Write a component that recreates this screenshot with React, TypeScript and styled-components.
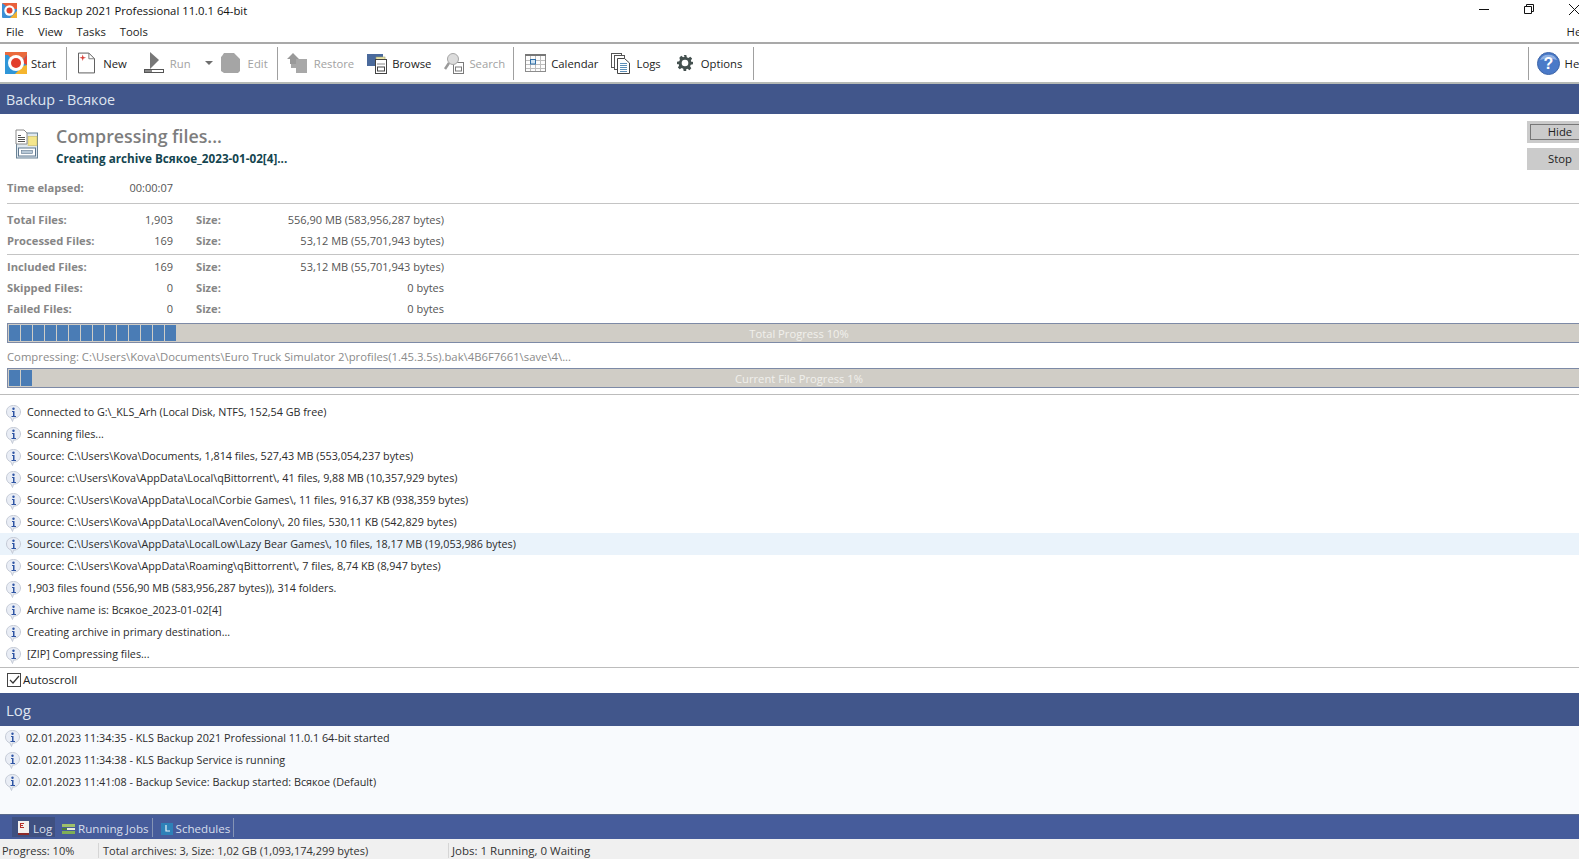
import React from "react";
import styled, { createGlobalStyle } from "styled-components";

const GlobalStyle = createGlobalStyle`
  html, body {
    margin: 0;
    padding: 0;
    background: #fff;
    overflow: hidden;
  }
  body {
    font-family: "Open Sans", "Noto Sans", sans-serif;
    font-size: 11.3px;
    color: #222;
  }
`;

const Window = styled.div`
  width: 1579px;
  height: 859px;
  overflow: hidden;
  display: flex;
  flex-direction: column;
  background: #fff;
`;

const TitleBar = styled.div`
  height: 21px;
  display: flex;
  align-items: center;
  padding-left: 2px;
  gap: 5px;
  color: #111;
`;

const WindowButtons = styled.div`
  margin-left: auto;
  display: flex;
  align-items: center;
  gap: 35px;
  margin-right: -1px;
  margin-bottom: 3px;
  color: #111;
`;

const MenuBar = styled.div`
  height: 21px;
  display: flex;
  align-items: center;
  padding-left: 6px;
  gap: 14px;
  color: #222;
`;

const HelpMenu = styled.span`
  margin-left: auto;
  margin-right: -12px;
`;

const Toolbar = styled.div`
  height: 38px;
  border-top: 2px solid #a9a9a9;
  border-bottom: 2px solid #b5b9b5;
  display: flex;
  align-items: center;
  padding-left: 5px;
  box-sizing: content-box;
`;

const ToolSeparator = styled.div<{ $right: number }>`
  width: 1px;
  height: 33px;
  background: #a0a0a0;
  margin-right: ${(p) => p.$right}px;
  flex-shrink: 0;
`;

const ToolButton = styled.div<{ $disabled?: boolean; $gap: number; $pad: number }>`
  display: flex;
  align-items: center;
  gap: ${(p) => p.$gap}px;
  margin-right: ${(p) => p.$pad}px;
  color: ${(p) => (p.$disabled ? "#a2a2a2" : "#222")};
  white-space: nowrap;
  flex-shrink: 0;
`;

const ToolSpacer = styled.div`
  flex: 1;
`;

const Caret = styled.div`
  width: 0;
  height: 0;
  border-left: 4px solid transparent;
  border-right: 4px solid transparent;
  border-top: 4px solid #6e6e6e;
  margin-right: 8px;
`;

const PanelHeader = styled.div<{ $big?: boolean }>`
  background: #41568b;
  color: #dfe5f0;
  height: ${(p) => (p.$big ? 33 : 30)}px;
  display: flex;
  align-items: center;
  padding-left: 6px;
  font-size: ${(p) => (p.$big ? 15 : 14.3)}px;
  flex-shrink: 0;
`;

const Content = styled.div`
  height: 579px;
  display: flex;
  flex-direction: column;
  flex-shrink: 0;
  overflow: hidden;
`;

const Status = styled.div`
  height: 65px;
  display: flex;
  align-items: flex-start;
  padding: 12px 0 0 15px;
  gap: 17px;
  flex-shrink: 0;
  box-sizing: border-box;
`;

const StatusText = styled.div`
  flex: 1;
`;

const ArchiveSvg = styled.svg`
  margin-top: 3px;
  flex-shrink: 0;
`;

const Heading = styled.div`
  font-size: 17.8px;
  line-height: 21px;
  font-weight: 600;
  color: #7d7d7d;
`;

const Subheading = styled.div`
  margin-top: 4px;
  font-size: 11.7px;
  line-height: 15px;
  font-weight: 700;
  color: #14454f;
`;

const SideButtons = styled.div`
  display: flex;
  flex-direction: column;
  gap: 5px;
  margin-top: -5px;
  margin-right: -14px;
`;

const SideButton = styled.div<{ $focused?: boolean }>`
  width: 66px;
  height: 22px;
  padding-bottom: 2px;
  background: #cbcbcb;
  display: flex;
  align-items: center;
  justify-content: center;
  color: #222;
  box-sizing: border-box;
  ${(p) => p.$focused && "outline: 1px solid #777; outline-offset: -4px;"}
`;

const Stats = styled.div`
  padding-left: 7px;
  color: #7c7c7c;
  font-size: 11px;
`;

const StatRow = styled.div`
  height: 21px;
  display: grid;
  grid-template-columns: 110px 56px 23px 27px 221px;
  align-items: center;
  white-space: nowrap;
`;

const ElapsedRow = styled(StatRow)`
  height: 17px;
  margin-bottom: 7px;
`;

const StatLabel = styled.span`
  font-weight: 700;
  font-size: 11.2px;
  color: #868686;
`;

const StatValue = styled.span<{ $column: number }>`
  grid-column: ${(p) => p.$column};
  text-align: right;
  color: #555;
`;

const SizeCell = styled(StatLabel)`
  grid-column: 4;
`;

const Rule = styled.div<{ $before: number; $after: number }>`
  height: 1px;
  background: #c4c4c4;
  margin: ${(p) => p.$before}px 0 ${(p) => p.$after}px;
`;

const Bar = styled.div<{ $top?: number }>`
  width: 1584px;
  height: 20px;
  box-sizing: border-box;
  margin: ${(p) => p.$top ?? 0}px 0 0 7px;
  background: #d0cdc6;
  border: 1px solid #7d8aa6;
  position: relative;
  flex-shrink: 0;
  display: flex;
  align-items: stretch;
  padding: 1px 0 1px 1px;
  gap: 1px;
`;

const BarChunk = styled.div`
  width: 11px;
  background: #4a7cb5;
`;

const BarLabel = styled.div`
  position: absolute;
  inset: 0;
  display: flex;
  align-items: center;
  justify-content: center;
  color: #f1f0ec;
  font-size: 11.2px;
`;

const FileLine = styled.div`
  height: 25px;
  padding: 2px 0 0 7px;
  box-sizing: border-box;
  display: flex;
  align-items: center;
  color: #8a8a8a;
  white-space: nowrap;
`;

const MessageList = styled.div`
  border-top: 1px solid #bcbcbc;
  margin-top: 6px;
  padding-top: 6px;
  flex: 1;
`;

const MessageRow = styled.div<{ $selected?: boolean }>`
  height: 22px;
  display: flex;
  align-items: center;
  gap: 6px;
  padding-left: 6px;
  font-size: 10.75px;
  color: #2b2b2b;
  white-space: nowrap;
  background: ${(p) => (p.$selected ? "#eaf3fb" : "transparent")};
`;

const AutoscrollRow = styled.div`
  height: 26px;
  padding-bottom: 2px;
  box-sizing: border-box;
  border-top: 1px solid #bcbcbc;
  display: flex;
  align-items: center;
  gap: 2px;
  padding-left: 7px;
  font-size: 11.6px;
  color: #222;
  flex-shrink: 0;
`;

const CheckBox = styled.div`
  width: 12px;
  height: 12px;
  border: 1px solid #444;
  display: flex;
  align-items: center;
  justify-content: center;
`;

const LogList = styled.div`
  flex: 1;
  background: #f8fafd;
`;

const LogRow = styled(MessageRow)`
  padding-left: 5px;
  font-size: 10.8px;
`;

const TabStrip = styled.div`
  height: 25px;
  background: #465c9b;
  border-top: 1px solid #5a6a8c;
  box-sizing: border-box;
  display: flex;
  align-items: stretch;
  padding-left: 12px;
  color: #d7deeb;
  font-size: 11.6px;
  flex-shrink: 0;
`;

const Tab = styled.div<{ $left?: number }>`
  display: flex;
  align-items: center;
  gap: 3px;
  padding: 2px 3px 0 0;
  margin: 3px 0 2px ${(p) => p.$left ?? 0}px;
  border-right: 1px solid #8594b5;
`;

const ActiveTab = styled.div`
  display: flex;
  align-items: center;
  gap: 4px;
  width: 43px;
  padding: 2px 0 0 6px;
  box-sizing: border-box;
  margin: 2px 7px 2px 0;
  background: #3f5080;
`;

const StatusBar = styled.div`
  height: 20px;
  background: #f0f0f0;
  display: flex;
  align-items: center;
  padding-top: 2px;
  box-sizing: border-box;
  font-size: 11px;
  color: #333;
  white-space: nowrap;
  flex-shrink: 0;
`;

const StatusCell = styled.div<{ $width: number; $pad: number }>`
  width: ${(p) => p.$width}px;
  padding-left: ${(p) => p.$pad}px;
  box-sizing: border-box;
  border-right: 1px solid #d5d5d5;
  height: 15px;
  line-height: 15px;
`;

const LastStatusCell = styled.div`
  padding-left: 3px;
  font-size: 11.5px;
`;

const AppIcon = () => (
  <svg width="15" height="15" viewBox="0 0 15 15">
    <rect width="15" height="15" rx="1" fill="#3c8fd6" />
    <path d="M0 0h15v6H8z" fill="#e8603c" />
    <path d="M8 15h7V8z" fill="#f2b134" />
    <circle cx="7.5" cy="7.5" r="5.2" fill="#fff" />
    <circle cx="7.5" cy="7.5" r="3" fill="#e0412f" />
  </svg>
);

const StartIcon = () => (
  <svg width="22" height="22" viewBox="0 0 22 22">
    <rect width="22" height="22" fill="#2f96d8" />
    <path d="M0 0h22v3l-5 5H8L3 3H0z" fill="#ea6a3c" />
    <path d="M22 3v10l-4-2V8z" fill="#e8452f" />
    <path d="M22 22H10l8-8 4-1z" fill="#f5b52e" />
    <circle cx="11" cy="11" r="8" fill="#fff" />
    <circle cx="11" cy="11" r="5" fill="#e23f2d" />
  </svg>
);

const NewIcon = () => (
  <svg width="17" height="22" viewBox="0 0 18 22">
    <path d="M.5.5h11l6 6v15H.5z" fill="#fff" stroke="#555" />
    <path d="M11.500.5v6h6" fill="none" stroke="#777" />
    <path d="M5 2l.8 2.700L8.500 5.500 5.800 6.300 5 9 4.200 6.300 1.500 5.500 4.200 4.700z" fill="#d8413a" />
  </svg>
);

const RunIcon = () => (
  <svg width="20" height="22" viewBox="0 0 20 22">
    <path d="M6 0l9 8-9 9z" fill="#777" />
    <rect x=".5" y="17.500" width="19" height="3" fill="#fff" stroke="#555" />
    <rect x="1" y="18" width="7" height="2" fill="#888" />
  </svg>
);

const EditIcon = () => (
  <svg width="19" height="20" viewBox="0 0 19 20">
    <path d="M1 3l2-3h10l6 6v12l-2 2H3l-3-2V4z" fill="#a5a5a5" />
  </svg>
);

const RestoreIcon = () => (
  <svg width="21" height="21" viewBox="0 0 21 21">
    <path d="M6 0L0 6h3v5h6V7h3V6z" fill="#999" />
    <rect x="9" y="6" width="11" height="14" fill="#a8a8a8" />
    <rect x="4" y="11" width="10" height="4" fill="#a8a8a8" />
  </svg>
);

const BrowseIcon = () => (
  <svg width="20" height="21" viewBox="0 0 20 21">
    <rect x="0" y="1" width="16" height="12" fill="#4a6a9c" />
    <rect x="9" y="4" width="9" height="8" fill="#eee8a8" stroke="#9a9a70" strokeWidth=".6" />
    <rect x="8.500" y="6.500" width="11" height="14" fill="#fff" stroke="#444" />
    <rect x="10.500" y="14" width="7" height="4" fill="none" stroke="#444" />
    <path d="M10 11h8" stroke="#888" />
  </svg>
);

const SearchIcon = () => (
  <svg width="20" height="21" viewBox="0 0 20 21">
    <rect x="9.500" y="9.500" width="10" height="11" fill="#fff" stroke="#7a7a7a" />
    <rect x="11.500" y="14" width="6" height="4" fill="none" stroke="#7a7a7a" />
    <circle cx="9" cy="6" r="5.500" fill="#dcdcdc" stroke="#a5a5a5" />
    <path d="M5 10l-4 6" stroke="#9a9a9a" strokeWidth="2.500" />
  </svg>
);

const CalendarIcon = () => (
  <svg width="21" height="18" viewBox="0 0 21 18">
    <rect x=".5" y=".5" width="20" height="17" fill="#fdfdfd" stroke="#8c8c8c" />
    <rect x="0" y="0" width="21" height="2" fill="#777" />
    <path d="M5.500 2v15M10.500 2v15M15.500 2v15M1 6.500h19M1 10.500h19M1 14.500h19" stroke="#bdbdbd" />
    <rect x="5.500" y="5.500" width="5" height="4.500" fill="#cfe3f2" stroke="#2f6ea8" />
  </svg>
);

const LogsIcon = () => (
  <svg width="19" height="21" viewBox="0 0 19 21">
    <rect x=".5" y=".5" width="10" height="14" fill="#fff" stroke="#555" />
    <rect x="3.500" y="2.500" width="10" height="14" fill="#fff" stroke="#555" />
    <path d="M6.500 5.500h7l5 4.500v10.500h-12z" fill="#fff" stroke="#444" />
    <path d="M9 10.500h7M9 12.500h7M9 14.500h7M9 16.500h7M9 18.500h7" stroke="#5c8fb8" />
  </svg>
);

const GearIcon = () => (
  <svg width="16" height="16" viewBox="0 0 24 24" fill="#44504f">
    <path fillRule="evenodd" d="M10 0h4l.7 3.400 2.300 1 2.900-1.900 2.800 2.800-1.900 2.900 1 2.300L24 10v4l-3.400.7-1 2.300 1.900 2.900-2.800 2.800-2.900-1.900-2.300 1L14 24h-4l-.7-3.400-2.300-1-2.900 1.900-2.800-2.800 1.900-2.900-1-2.300L0 14v-4l3.400-.7 1-2.300L3.500 4.100l2.800-2.800 2.900 1.900 2.300-1zM12 7a5 5 0 100 10 5 5 0 000-10z" />
  </svg>
);

const HelpIcon = () => (
  <svg width="23" height="23" viewBox="0 0 23 23">
    <circle cx="11.500" cy="11.500" r="11" fill="#4a7ac8" stroke="#3f66a8" />
    <path d="M3 8a9 8 0 0117 0q-8-3-17 0z" fill="#8fb0e2" />
    <text x="11.500" y="17" textAnchor="middle" fontSize="16" fontWeight="700" fill="#fff" fontFamily="Liberation Sans, sans-serif">?</text>
  </svg>
);

const ArchiveIcon = () => (
  <ArchiveSvg width="24" height="31" viewBox="0 0 24 30">
    <rect x="1.500" y="3.500" width="21" height="25" fill="#dfe8ef" stroke="#6a8396" />
    <rect x="13" y="7" width="9" height="9" fill="#f4e68c" stroke="#c8b85c" strokeWidth=".6" />
    <path d="M1 .5h8l3 3v11H1z" fill="#fff" stroke="#8a8a8a" />
    <path d="M3 6h3M3 8h7M3 10h7M3 12h7" stroke="#555" />
    <rect x="3.500" y="18.500" width="17" height="8" fill="#fff" stroke="#5f7890" />
    <rect x="6.500" y="21" width="11" height="3" fill="#b7c8d6" stroke="#5f7890" strokeWidth=".6" />
  </ArchiveSvg>
);

const InfoSvg = styled.svg`
  margin-top: 3px;
  flex-shrink: 0;
`;

const InfoIcon = () => (
  <InfoSvg width="15" height="17" viewBox="0 0 15 17">
    <path d="M7.500.5C3.300.5.500 3 .5 7c0 3 1.800 5 4.500 6l1.500 3.500 1-3.300c4 0 7-2.600 7-6.200S11.700.5 7.500.5z" fill="#e9edf5" stroke="#c4cad6" />
    <circle cx="7.500" cy="3.700" r="1.200" fill="#2f55a4" />
    <path d="M6 6h2.500v5H10v1H5.500v-1H7V7H6z" fill="#2f55a4" />
  </InfoSvg>
);

const TabLogIcon = () => (
  <svg width="11" height="14" viewBox="0 0 11 14">
    <rect width="11" height="14" fill="#f3f0ee" />
    <path d="M2 2h4v1H3v1h2v1H3v1h3v1H2z" fill="#b5302b" />
    <rect y="12" width="11" height="2" fill="#8c2a2a" />
  </svg>
);

const TabJobsIcon = () => (
  <svg width="13" height="10" viewBox="0 0 13 10">
    <rect width="13" height="3" fill="#9ec06a" />
    <rect y="4" width="5" height="2" fill="#4b7a3c" />
    <rect x="5" y="4" width="8" height="2" fill="#e8ecdf" />
    <rect y="7" width="13" height="3" fill="#7fae56" />
  </svg>
);

const TabScheduleIcon = () => (
  <svg width="12" height="12" viewBox="0 0 12 12">
    <rect width="12" height="12" fill="#2e81b8" />
    <path d="M5 2v6h4" fill="none" stroke="#e8f3fa" strokeWidth="1.200" />
  </svg>
);

const messages = [
  "Connected to G:\\_KLS_Arh (Local Disk, NTFS, 152,54 GB free)",
  "Scanning files...",
  "Source: C:\\Users\\Kova\\Documents, 1,814 files, 527,43 MB (553,054,237 bytes)",
  "Source: c:\\Users\\Kova\\AppData\\Local\\qBittorrent\\, 41 files, 9,88 MB (10,357,929 bytes)",
  "Source: C:\\Users\\Kova\\AppData\\Local\\Corbie Games\\, 11 files, 916,37 KB (938,359 bytes)",
  "Source: C:\\Users\\Kova\\AppData\\Local\\AvenColony\\, 20 files, 530,11 KB (542,829 bytes)",
  "Source: C:\\Users\\Kova\\AppData\\LocalLow\\Lazy Bear Games\\, 10 files, 18,17 MB (19,053,986 bytes)",
  "Source: C:\\Users\\Kova\\AppData\\Roaming\\qBittorrent\\, 7 files, 8,74 KB (8,947 bytes)",
  "1,903 files found (556,90 MB (583,956,287 bytes)), 314 folders.",
  "Archive name is: Всякое_2023-01-02[4]",
  "Creating archive in primary destination...",
  "[ZIP] Compressing files...",
];

const logLines = [
  "02.01.2023 11:34:35 - KLS Backup 2021 Professional 11.0.1 64-bit started",
  "02.01.2023 11:34:38 - KLS Backup Service is running",
  "02.01.2023 11:41:08 - Backup Sevice: Backup started: Всякое (Default)",
];

const totalStats = [
  ["Total Files:", "1,903", "556,90 MB (583,956,287 bytes)"],
  ["Processed Files:", "169", "53,12 MB (55,701,943 bytes)"],
];

const resultStats = [
  ["Included Files:", "169", "53,12 MB (55,701,943 bytes)"],
  ["Skipped Files:", "0", "0 bytes"],
  ["Failed Files:", "0", "0 bytes"],
];

const renderStat = ([label, count, size]: string[]) => (
  <StatRow key={label}>
    <StatLabel>{label}</StatLabel>
    <StatValue $column={2}>{count}</StatValue>
    <SizeCell>Size:</SizeCell>
    <StatValue $column={5}>{size}</StatValue>
  </StatRow>
);

const App = () => {
  return (
    <Window>
      <GlobalStyle />
      <TitleBar>
        <AppIcon />
        <span>KLS Backup 2021 Professional 11.0.1 64-bit</span>
        <WindowButtons>
          <svg width="10" height="10" viewBox="0 0 10 10">
            <path d="M0 5.500h10" stroke="#111" />
          </svg>
          <svg width="10" height="10" viewBox="0 0 10 10">
            <path d="M2.500 2.500V.5h7v7h-2M.5 2.500h7v7h-7z" fill="none" stroke="#111" />
          </svg>
          <svg width="11" height="11" viewBox="0 0 11 11">
            <path d="M0 0l11 11M11 0L0 11" stroke="#111" />
          </svg>
        </WindowButtons>
      </TitleBar>
      <MenuBar>
        <span>File</span>
        <span>View</span>
        <span>Tasks</span>
        <span>Tools</span>
        <HelpMenu>Help</HelpMenu>
      </MenuBar>
      <Toolbar>
        <ToolButton $gap={4} $pad={10}><StartIcon />Start</ToolButton>
        <ToolSeparator $right={11} />
        <ToolButton $gap={8} $pad={17}><NewIcon />New</ToolButton>
        <ToolButton $disabled $gap={6} $pad={14}><RunIcon />Run</ToolButton>
        <Caret />
        <ToolButton $disabled $gap={8} $pad={9}><EditIcon />Edit</ToolButton>
        <ToolSeparator $right={9} />
        <ToolButton $disabled $gap={6} $pad={13}><RestoreIcon />Restore</ToolButton>
        <ToolButton $gap={5} $pad={13}><BrowseIcon />Browse</ToolButton>
        <ToolButton $disabled $gap={5} $pad={8}><SearchIcon />Search</ToolButton>
        <ToolSeparator $right={11} />
        <ToolButton $gap={5} $pad={13}><CalendarIcon />Calendar</ToolButton>
        <ToolButton $gap={6} $pad={16}><LogsIcon />Logs</ToolButton>
        <ToolButton $gap={8} $pad={11}><GearIcon />Options</ToolButton>
        <ToolSeparator $right={0} />
        <ToolSpacer />
        <ToolSeparator $right={8} />
        <ToolButton $gap={5} $pad={-10}><HelpIcon />Help</ToolButton>
      </Toolbar>
      <PanelHeader>Backup - Всякое</PanelHeader>
      <Content>
        <Status>
          <ArchiveIcon />
          <StatusText>
            <Heading>Compressing files...</Heading>
            <Subheading>Creating archive Всякое_2023-01-02[4]...</Subheading>
          </StatusText>
          <SideButtons>
            <SideButton $focused>Hide</SideButton>
            <SideButton>Stop</SideButton>
          </SideButtons>
        </Status>
        <Stats>
          <ElapsedRow>
            <StatLabel>Time elapsed:</StatLabel>
            <StatValue $column={2}>00:00:07</StatValue>
          </ElapsedRow>
          <Rule $before={0} $after={5} />
          {totalStats.map(renderStat)}
          <Rule $before={3} $after={1} />
          {resultStats.map(renderStat)}
        </Stats>
        <Bar $top={4}>
          {Array.from({ length: 14 }, (_, i) => <BarChunk key={i} />)}
          <BarLabel>Total Progress 10%</BarLabel>
        </Bar>
        <FileLine>Compressing: C:\Users\Kova\Documents\Euro Truck Simulator 2\profiles(1.45.3.5s).bak\4B6F7661\save\4\...</FileLine>
        <Bar>
          {Array.from({ length: 2 }, (_, i) => <BarChunk key={i} />)}
          <BarLabel>Current File Progress 1%</BarLabel>
        </Bar>
        <MessageList>
          {messages.map((m, i) => (
            <MessageRow key={m} $selected={i === 6}>
              <InfoIcon />
              {m}
            </MessageRow>
          ))}
        </MessageList>
        <AutoscrollRow>
          <CheckBox>
            <svg width="11" height="10" viewBox="0 0 11 10">
              <path d="M1 5l3 3 6-7" fill="none" stroke="#333" strokeWidth="1.200" />
            </svg>
          </CheckBox>
          Autoscroll
        </AutoscrollRow>
      </Content>
      <PanelHeader $big>Log</PanelHeader>
      <LogList>
        {logLines.map((l) => (
          <LogRow key={l}>
            <InfoIcon />
            {l}
          </LogRow>
        ))}
      </LogList>
      <TabStrip>
        <ActiveTab><TabLogIcon />Log</ActiveTab>
        <Tab><TabJobsIcon />Running Jobs</Tab>
        <Tab $left={8}><TabScheduleIcon />Schedules</Tab>
      </TabStrip>
      <StatusBar>
        <StatusCell $width={99} $pad={2}>Progress: 10%</StatusCell>
        <StatusCell $width={350} $pad={4}>Total archives: 3, Size: 1,02 GB (1,093,174,299 bytes)</StatusCell>
        <LastStatusCell>Jobs: 1 Running, 0 Waiting</LastStatusCell>
      </StatusBar>
    </Window>
  );
};

export default App;
